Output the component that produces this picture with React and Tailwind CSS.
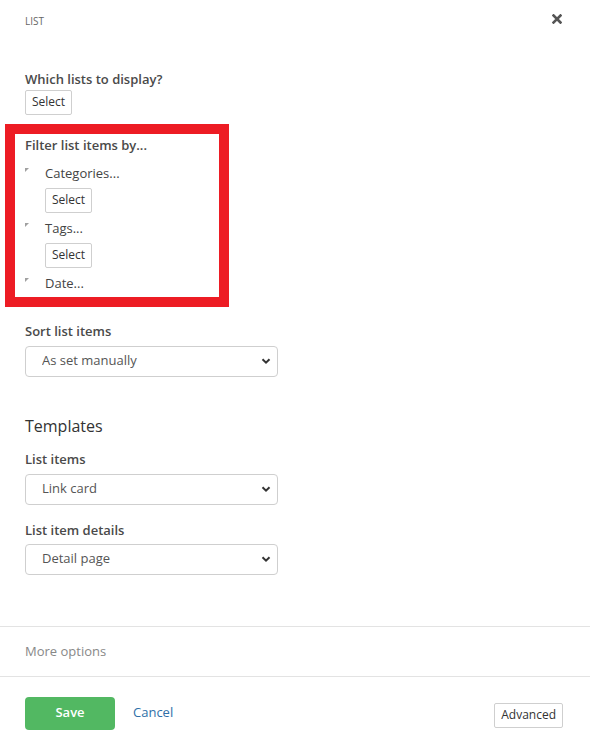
import { useState } from "react";

const Chevron = () => (
  <svg width="10" height="10" viewBox="0 0 10 10" className="pointer-events-none absolute right-[7px] top-1/2 -translate-y-1/2">
    <path d="M1.5 3.2 L5 6.7 L8.5 3.2" fill="none" stroke="#333" strokeWidth="2" />
  </svg>
);

const SmallButton = ({ children, className = "" }) => (
  <button className={`h-[25px] px-[6px] border border-[#cfcfcf] rounded-[2px] bg-white text-[12px] text-[#333] leading-none ${className}`}>
    {children}
  </button>
);

const Dropdown = ({ value, options, onChange }) => (
  <div className="relative w-[253px] h-[31px]">
    <select
      value={value}
      onChange={(e) => onChange(e.target.value)}
      className="appearance-none w-full h-full border border-[#cfcfcf] rounded-[4px] bg-white pl-[16px] text-[13px] text-[#555] outline-none"
    >
      {options.map((o) => (
        <option key={o} value={o}>
          {o}
        </option>
      ))}
    </select>
    <Chevron />
  </div>
);

const Marker = () => (
  <svg width="4" height="4" viewBox="0 0 4 4" className="mt-[-6px] shrink-0">
    <path d="M0 0 H4 L0 4 Z" fill="#a0a0a0" />
  </svg>
);

export default function App() {
  const [sort, setSort] = useState("As set manually");
  const [item, setItem] = useState("Link card");
  const [detail, setDetail] = useState("Detail page");
  const filters = ["Categories...", "Tags...", "Date..."];

  return (
    <div className="w-[590px] h-[747px] bg-white font-['Open_Sans',sans-serif] text-[#333] overflow-hidden">
      <div className="flex justify-between items-center pl-[25px] pr-[28px] pt-[14px]">
        <span className="text-[10px] leading-[14px] text-[#666]">LIST</span>
        <svg width="10" height="10" viewBox="0 0 10 10" className="mt-[-4px]">
          <path d="M1.5 1.5 L8.5 8.5 M8.5 1.5 L1.5 8.5" stroke="#555" strokeWidth="2.6" strokeLinecap="square" />
        </svg>
      </div>

      <div className="pl-[25px] mt-[42px]">
        <p className="text-[13px] leading-[18px] font-semibold text-[#4a4a4a]">Which lists to display?</p>
        <SmallButton className="mt-[1px]">Select</SmallButton>
      </div>

      <div className="ml-[5px] mt-[9px] w-[224px] border-[10px] border-[#ed1c24] pl-[10px] pt-[2px] pb-[5px]">
        <p className="text-[13px] leading-[18px] font-semibold text-[#4a4a4a]">Filter list items by...</p>
        {filters.map((f, i) => (
          <div key={f} className={i === 0 ? "mt-[10px]" : "mt-[6px]"}>
            <div className="flex items-center">
              <Marker />
              <span className="ml-[16px] text-[13px] leading-[18px] text-[#444]">{f}</span>
            </div>
            {f !== "Date..." && <SmallButton className="ml-[20px] mt-[6px]">Select</SmallButton>}
          </div>
        ))}
      </div>

      <div className="pl-[25px]">
        <p className="mt-[15px] text-[13px] leading-[18px] font-semibold text-[#4a4a4a]">Sort list items</p>
        <div className="mt-[6px]">
          <Dropdown value={sort} onChange={setSort} options={["As set manually", "Title", "Date"]} />
        </div>

        <p className="mt-[38px] text-[16px] leading-[22px] font-medium text-[#333]">Templates</p>

        <p className="mt-[13px] text-[13px] leading-[18px] font-semibold text-[#4a4a4a]">List items</p>
        <div className="mt-[6px]">
          <Dropdown value={item} onChange={setItem} options={["Link card", "Card", "List"]} />
        </div>

        <p className="mt-[16px] text-[13px] leading-[18px] font-semibold text-[#4a4a4a]">List item details</p>
        <div className="mt-[5px]">
          <Dropdown value={detail} onChange={setDetail} options={["Detail page", "Popup"]} />
        </div>
      </div>

      <div className="mt-[51px] border-t border-[#e3e3e3]"></div>
      <p className="pl-[25px] mt-[15px] text-[13px] leading-[18px] text-[#888]">More options</p>
      <div className="mt-[16px] border-t border-[#e3e3e3]"></div>

      <div className="flex items-center pl-[25px] pr-[27px] mt-[20px]">
        <button className="w-[90px] h-[33px] rounded-[4px] bg-[#52b862] text-white text-[13px] font-semibold">Save</button>
        <a href="#" className="ml-[18px] text-[13px] text-[#2f6fa8]">
          Cancel
        </a>
        <SmallButton className="ml-auto mt-[4px] border-[#bbb] px-[5px]">Advanced</SmallButton>
      </div>
    </div>
  );
}
